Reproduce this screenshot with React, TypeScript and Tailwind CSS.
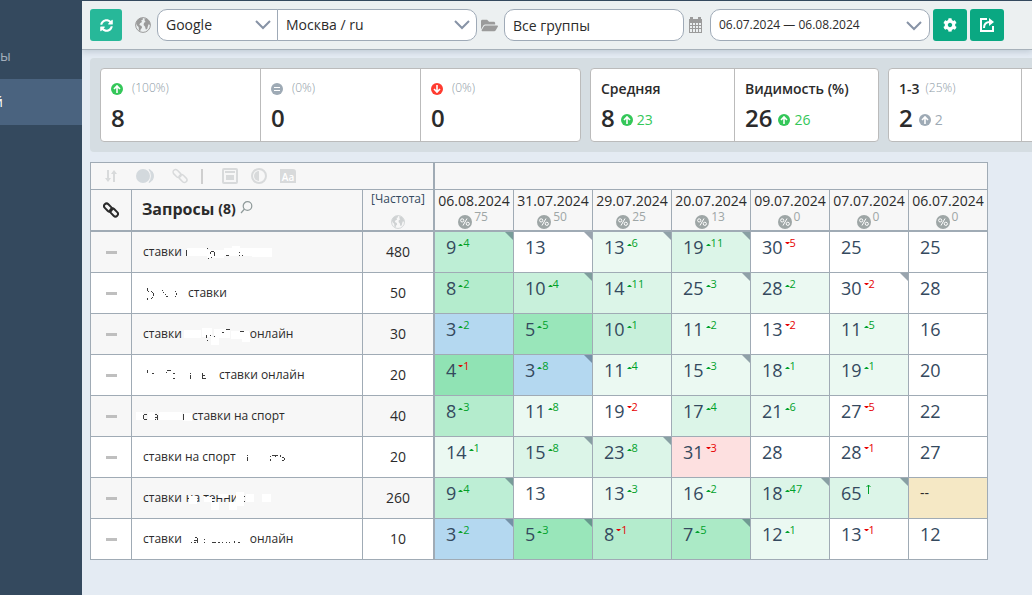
import { ReactNode } from "react";
import clsx from "clsx";
import { FaCog, FaFolderOpen, FaSyncAlt } from "react-icons/fa";

type Box = [number, number, number, number];

interface Smudge {
  width: number;
  patches?: Box[];
  marks?: Box[];
}

interface Position {
  value: string;
  tone?: keyof typeof tones;
  delta?: number;
  isNew?: boolean;
  flag?: boolean;
}

interface Query {
  parts: (string | Smudge)[];
  frequency: number;
  positions: Position[];
}

const tones = {
  white: "bg-white",
  faint: "bg-[#ebf9f2]",
  light: "bg-[#dcf5e8]",
  top10: "bg-[#c8f0db]",
  top9: "bg-[#bdeed5]",
  top8: "bg-[#b4eccd]",
  top7: "bg-[#abeac6]",
  top5: "bg-[#99e6ba]",
  top4: "bg-[#90e3b4]",
  top3: "bg-[#b4d8f0]",
  lost: "bg-[#fde0e0]",
  none: "bg-[#f5e8c5]",
};

const dates = [
  { date: "06.08.2024", percent: 75 },
  { date: "31.07.2024", percent: 50 },
  { date: "29.07.2024", percent: 25 },
  { date: "20.07.2024", percent: 13 },
  { date: "09.07.2024", percent: 0 },
  { date: "07.07.2024", percent: 0 },
  { date: "06.07.2024", percent: 0 },
];

const queries: Query[] = [
  {
    parts: [
      "ставки",
      {
        width: 90,
        patches: [[5, 16, 20, 8], [25, 18, 17, 8], [42, 16, 28, 8], [50, 14, 8, 3], [70, 16, 20, 9]],
        marks: [[4, 18, 1, 6], [25, 16, 1, 1], [26, 26, 1, 1], [29, 19, 3, 1], [28, 20, 1, 2], [32, 20, 1, 4], [29, 25, 1, 1], [44, 23, 3, 1], [57, 20, 1, 1], [57, 23, 1, 1], [60, 23, 1, 1]],
      },
    ],
    frequency: 480,
    positions: [
      { value: "9", delta: 4, tone: "top9", flag: true },
      { value: "13", flag: true },
      { value: "13", delta: 6, tone: "faint", flag: true },
      { value: "19", delta: 11, tone: "light", flag: true },
      { value: "30", delta: -5 },
      { value: "25" },
      { value: "25" },
    ],
  },
  {
    parts: [
      {
        width: 45,
        marks: [[4, 15, 1, 3], [5, 18, 1, 1], [4, 25, 1, 2], [8, 18, 1, 1], [9, 19, 1, 1], [10, 20, 1, 3], [9, 24, 1, 1], [8, 25, 1, 1], [19, 17, 1, 1], [20, 19, 1, 1], [22, 21, 1, 1], [23, 23, 2, 1], [32, 18, 1, 1], [33, 20, 1, 2], [32, 23, 1, 1]],
      },
      "ставки",
    ],
    frequency: 50,
    positions: [
      { value: "8", delta: 2, tone: "top8" },
      { value: "10", delta: 4, tone: "top10", flag: true },
      { value: "14", delta: 11, tone: "light" },
      { value: "25", delta: 3, tone: "faint", flag: true },
      { value: "28", delta: 2, tone: "faint" },
      { value: "30", delta: -2, flag: true },
      { value: "28" },
    ],
  },
  {
    parts: [
      "ставки",
      {
        width: 68,
        patches: [[2, 16, 17, 8], [20, 14, 10, 9], [29, 23, 8, 8], [32, 15, 16, 9], [49, 17, 18, 8], [60, 19, 8, 9]],
        marks: [[24, 21, 1, 3], [25, 26, 1, 1], [28, 21, 1, 1], [32, 22, 1, 1], [40, 18, 2, 1], [44, 15, 4, 1], [58, 17, 4, 1]],
      },
      "онлайн",
    ],
    frequency: 30,
    positions: [
      { value: "3", delta: 2, tone: "top3" },
      { value: "5", delta: 5, tone: "top5" },
      { value: "10", delta: 1, tone: "top10" },
      { value: "11", delta: 2, tone: "faint" },
      { value: "13", delta: -2 },
      { value: "11", delta: 5, tone: "faint" },
      { value: "16" },
    ],
  },
  {
    parts: [
      {
        width: 76,
        marks: [[4, 15, 1, 3], [9, 18, 2, 1], [24, 15, 4, 1], [23, 17, 1, 1], [30, 18, 2, 1], [30, 23, 2, 1], [47, 18, 1, 1], [47, 20, 1, 4], [59, 18, 1, 6], [60, 20, 2, 1], [60, 23, 3, 1]],
      },
      "ставки онлайн",
    ],
    frequency: 20,
    positions: [
      { value: "4", delta: -1, tone: "top4" },
      { value: "3", delta: 8, tone: "top3", flag: true },
      { value: "11", delta: 4, tone: "faint" },
      { value: "15", delta: 3, tone: "faint", flag: true },
      { value: "18", delta: 1, tone: "faint" },
      { value: "19", delta: 1, tone: "faint" },
      { value: "20" },
    ],
  },
  {
    parts: [
      {
        width: 49,
        patches: [[-7, 16, 7, 8], [5, 16, 7, 8], [16, 16, 23, 8], [41, 17, 8, 8]],
        marks: [[1, 18, 3, 1], [0, 19, 1, 4], [1, 23, 3, 1], [12, 18, 2, 1], [14, 19, 1, 5], [12, 21, 2, 1], [12, 23, 1, 1], [40, 18, 1, 6]],
      },
      "ставки на спорт",
    ],
    frequency: 40,
    positions: [
      { value: "8", delta: 3, tone: "top8" },
      { value: "11", delta: 8, tone: "faint" },
      { value: "19", delta: -2 },
      { value: "17", delta: 4, tone: "light" },
      { value: "21", delta: 6, tone: "faint" },
      { value: "27", delta: -5 },
      { value: "22" },
    ],
  },
  {
    parts: [
      "ставки на спорт",
      {
        width: 50,
        marks: [[11, 18, 1, 1], [11, 20, 1, 4], [34, 19, 1, 1], [34, 22, 1, 2], [36, 18, 6, 1], [39, 19, 1, 1], [44, 18, 1, 2], [46, 20, 2, 1], [48, 21, 1, 2], [46, 23, 2, 1]],
      },
    ],
    frequency: 20,
    positions: [
      { value: "14", delta: 1, tone: "faint" },
      { value: "15", delta: 8, tone: "light", flag: true },
      { value: "23", delta: 8, tone: "light", flag: true },
      { value: "31", delta: -3, tone: "lost" },
      { value: "28" },
      { value: "28", delta: -1 },
      { value: "27" },
    ],
  },
  {
    parts: [
      "ставки",
      {
        width: 4,
        patches: [[7, 18, 8, 8], [22, 19, 8, 5], [29, 24, 8, 8], [37, 16, 9, 4], [47, 24, 8, 8], [54, 14, 8, 14], [64, 16, 8, 8], [80, 16, 9, 8]],
        marks: [[62, 18, 1, 1], [62, 23, 1, 1]],
      },
      "на тенни",
    ],
    frequency: 260,
    positions: [
      { value: "9", delta: 4, tone: "top9", flag: true },
      { value: "13" },
      { value: "13", delta: 3, tone: "faint" },
      { value: "16", delta: 2, tone: "faint" },
      { value: "18", delta: 47, tone: "light", flag: true },
      { value: "65", isNew: true, tone: "light", flag: true },
      { value: "--", tone: "none" },
    ],
  },
  {
    parts: [
      "ставки",
      {
        width: 68,
        marks: [[9, 23, 1, 1], [13, 18, 2, 1], [15, 19, 1, 5], [12, 21, 3, 1], [12, 23, 2, 1], [22, 20, 1, 1], [22, 23, 1, 1], [30, 23, 4, 1], [36, 23, 2, 1], [40, 23, 1, 1], [44, 23, 1, 1], [47, 23, 1, 1], [52, 22, 1, 2], [56, 23, 2, 1]],
      },
      "онлайн",
    ],
    frequency: 10,
    positions: [
      { value: "3", delta: 2, tone: "top3", flag: true },
      { value: "5", delta: 3, tone: "top5", flag: true },
      { value: "8", delta: -1, tone: "top8" },
      { value: "7", delta: 5, tone: "top7", flag: true },
      { value: "12", delta: 1, tone: "faint" },
      { value: "13", delta: -1 },
      { value: "12" },
    ],
  },
];

function GlobeIcon({ className }: { className?: string }) {
  return (
    <svg viewBox="0 0 16 16" className={className} fill="currentColor" aria-hidden="true">
      <circle cx="8" cy="8" r="7.4" fill="none" stroke="currentColor" strokeWidth="1" />
      <path d="M1 6 L2.5 2.8 L5.5 1 L8 1.2 L7.6 3 L6.2 3.2 L7 5 L5 6.2 L4.4 8 L6.6 9 L7 10.8 L5.6 12.4 L5.2 14.8 L3.9 13 L3.6 10 L1.8 8.2 Z" />
      <path d="M9.6 1.2 L12.6 2.2 L15 5.6 L15.2 8 L13.6 7.2 L12.8 9.4 L12.2 12 L10.8 12.6 L10 9.4 L8.6 8 L9 5.8 L10.6 5 L9.6 3.6 Z" />
    </svg>
  );
}

function CalendarIcon() {
  return (
    <svg viewBox="0 0 13 16" className="h-4 w-[13px] text-[#9b9b9b]" fill="currentColor" aria-hidden="true">
      <path
        fillRule="evenodd"
        d="M0 2h1V0h3v2h5V0h3v2h1v14H0zM1 6v2h2V6zM4 6v2h2V6zM7 6v2h2V6zM10 6v2h2V6zM1 9v2h2V9zM4 9v2h2V9zM7 9v2h2V9zM10 9v2h2V9zM1 12v3h2v-3zM4 12v3h2v-3zM7 12v3h2v-3zM10 12v3h2v-3z"
      />
    </svg>
  );
}

function ExportIcon() {
  return (
    <svg viewBox="0 0 16 16" className="size-4" fill="none" stroke="currentColor" strokeWidth="2" aria-hidden="true">
      <path d="M8 2H2v12h12V9" />
      <path d="M5 11c0-4 2-6 6-6" />
      <path d="M10 1l5 4-5 4z" fill="currentColor" stroke="none" />
    </svg>
  );
}

function ChainIcon({ className, strokeWidth }: { className: string; strokeWidth: number }) {
  return (
    <svg viewBox="0 0 16 16" className={className} fill="none" stroke="currentColor" strokeWidth={strokeWidth} aria-hidden="true">
      <rect x="0.500" y="3" width="9" height="5" rx="2.500" transform="rotate(45 5 5.500)" />
      <rect x="6.500" y="8" width="9" height="5" rx="2.500" transform="rotate(45 11 10.500)" />
    </svg>
  );
}

function Chevron() {
  return (
    <svg
      viewBox="0 0 16 10"
      className="pointer-events-none absolute right-[7px] top-[11px] h-[10px] w-4"
      fill="none"
      stroke="#8793a6"
      strokeWidth="2"
      aria-hidden="true"
    >
      <path d="M1 1l7 7 7-7" />
    </svg>
  );
}

function StatusIcon({ kind, className }: { kind: "up" | "down" | "same"; className: string }) {
  return (
    <svg viewBox="0 0 12 12" className={clsx("size-3 shrink-0", className)} aria-hidden="true">
      <circle cx="6" cy="6" r="6" fill="currentColor" />
      {kind === "same" ? (
        <path d="M3 4.5h6M3 7.5h6" stroke="#fff" strokeWidth="1.2" />
      ) : (
        <path
          d={kind === "up" ? "M6 10V3M3 6l3-3 3 3" : "M6 2v7M3 6l3 3 3-3"}
          stroke="#fff"
          strokeWidth="1.6"
          fill="none"
        />
      )}
    </svg>
  );
}

function PercentIcon() {
  return (
    <svg viewBox="0 0 14 14" className="size-[14px]" aria-hidden="true">
      <circle cx="7" cy="7" r="7" fill="#9ea6a6" />
      <g fill="none" stroke="#fff">
        <circle cx="4.2" cy="5.4" r="1.6" />
        <circle cx="9.8" cy="8.8" r="1.6" />
        <path d="M9 3.5L5 10.5" />
      </g>
    </svg>
  );
}

function SmudgeMark({ smudge }: { smudge: Smudge }) {
  return (
    <svg
      width={smudge.width}
      height="40"
      className="relative shrink-0 overflow-visible"
      shapeRendering="crispEdges"
      aria-hidden="true"
    >
      {smudge.patches?.map(([x, y, w, h], i) => (
        <rect key={i} x={x} y={y} width={w} height={h} fill="#fff" />
      ))}
      {smudge.marks?.map(([x, y, w, h], i) => (
        <rect key={i} x={x} y={y} width={w} height={h} fill="#3c3c3c" />
      ))}
    </svg>
  );
}

function Select({ label, value, className }: { label: string; value: string; className: string }) {
  return (
    <div className="relative">
      <select
        aria-label={label}
        defaultValue={value}
        className={clsx("h-8 appearance-none border border-[#9faab7] bg-white pl-2 pr-7 text-sm text-[#2b2b2b]", className)}
      >
        <option>{value}</option>
      </select>
      <Chevron />
    </div>
  );
}

function Toolbar() {
  return (
    <header className="relative flex h-[49px] items-center border-b border-[#a7b1ba] bg-[#ecf0f1] pl-2 shadow-[0_2px_6px_rgba(52,73,94,0.2)]">
      <button type="button" aria-label="Обновить" className="flex size-8 items-center justify-center rounded-[3px] bg-[#27b899] text-white">
        <FaSyncAlt className="size-[13px]" />
      </button>
      <GlobeIcon className="mr-1.5 ml-[13px] size-4 text-[#9b9b9b]" />
      <Select label="Поисковая система" value="Google" className="w-[121px] rounded-l-[10px]" />
      <div className="-ml-px">
        <Select label="Регион" value="Москва / ru" className="w-[200px] rounded-r-[10px]" />
      </div>
      <FaFolderOpen className="mr-1.5 ml-1 size-[17px] text-[#9b9b9b]" />
      <input
        aria-label="Группы"
        defaultValue="Все группы"
        className="h-8 w-[180px] rounded-[10px] border border-[#9faab7] bg-white px-2 text-sm text-[#2b2b2b]"
      />
      <div className="mr-2 ml-[5px]">
        <CalendarIcon />
      </div>
      <button
        type="button"
        className="relative h-8 w-[220px] rounded-[10px] border border-[#9faab7] bg-white px-2 pb-px text-left text-xs text-[#2b2b2b]"
      >
        06.07.2024 — 06.08.2024
        <Chevron />
      </button>
      <div className="ml-[3px] flex gap-[3px]">
        <button type="button" aria-label="Настройки" className="flex h-8 w-[34px] items-center justify-center rounded-[3px] bg-[#0aa882] text-white">
          <FaCog className="size-[14px]" />
        </button>
        <button type="button" aria-label="Экспорт" className="flex h-8 w-[34px] items-center justify-center rounded-[3px] bg-[#0aa882] text-white">
          <ExportIcon />
        </button>
      </div>
    </header>
  );
}

function StatCard({ title, value, className }: { title: ReactNode; value: ReactNode; className: string }) {
  return (
    <div className={clsx("h-[72px] shrink-0 pt-2.5 pl-2.5", className)}>
      <div className="flex h-5 items-center whitespace-nowrap text-sm font-semibold">{title}</div>
      <div className="mt-[3px] flex h-8 items-center gap-1.5 text-2xl font-semibold">{value}</div>
    </div>
  );
}

function Percent({ children }: { children: string }) {
  return <span className="pb-0.5 text-xs font-light text-[#8d9aa5]">{children}</span>;
}

function Trend({ value, className }: { value: number; className: string }) {
  return (
    <span className={clsx("flex items-center gap-1 pt-1 text-sm font-normal", className)}>
      <StatusIcon kind="up" className={className} />
      {value}
    </span>
  );
}

function Summary() {
  const group = "flex shrink-0 divide-x divide-[#bbbbbb] rounded-[4px] border border-[#bbbbbb] bg-white";

  return (
    <section className="ml-2 flex gap-[9px] overflow-hidden rounded-l-[4px] bg-[#d5dde2] p-2.5">
      <div className={group}>
        <StatCard
          className="w-[160px]"
          title={<><StatusIcon kind="up" className="mr-[9px] text-[#34c759]" /><Percent>(100%)</Percent></>}
          value="8"
        />
        <StatCard
          className="w-[160px]"
          title={<><StatusIcon kind="same" className="mr-[9px] text-[#9eaab5]" /><Percent>(0%)</Percent></>}
          value="0"
        />
        <StatCard
          className="w-[159px]"
          title={<><StatusIcon kind="down" className="mr-[9px] text-[#ff3b30]" /><Percent>(0%)</Percent></>}
          value="0"
        />
      </div>
      <div className={group}>
        <StatCard className="w-[144px]" title="Средняя" value={<>8<Trend value={23} className="text-[#34c759]" /></>} />
        <StatCard className="w-[143px]" title="Видимость (%)" value={<>26<Trend value={26} className="text-[#34c759]" /></>} />
      </div>
      <div className={group}>
        <StatCard
          className="w-[133px]"
          title={<><span className="mr-1.5">1-3</span><Percent>(25%)</Percent></>}
          value={<>2<Trend value={2} className="text-[#9eaab5]" /></>}
        />
        <StatCard className="w-[133px]" title="" value="" />
      </div>
    </section>
  );
}

function TableTools() {
  const button = "flex h-5 items-center justify-center";

  return (
    <div className="flex h-[26px] items-center pl-3 text-[#d8dadb]">
      <button type="button" aria-label="Сортировка" className={clsx(button, "w-4")}>
        <svg viewBox="0 0 14 14" className="size-[14px]" fill="none" stroke="currentColor" strokeWidth="2">
          <path d="M4 1v10M10 13V3" />
          <path d="M1 9l3 4 3-4zM7 5l3-4 3 4z" fill="currentColor" stroke="none" />
        </svg>
      </button>
      <button type="button" aria-label="Сравнение" className={clsx(button, "ml-[17px] w-5")}>
        <svg viewBox="0 0 20 14" className="h-[14px] w-5">
          <circle cx="7" cy="7" r="7" fill="#d3d9dd" />
          <path d="M13 0.500a7 7 0 0 1 0 13a10 10 0 0 0 0-13z" fill="#d3d9dd" stroke="#d3d9dd" />
        </svg>
      </button>
      <button type="button" aria-label="Ссылки" className={clsx(button, "ml-4 w-4")}>
        <ChainIcon className="size-4" strokeWidth={1.5} />
      </button>
      <span className="ml-[13px] h-[15px] w-0.5 bg-[#cfcfcf]" />
      <button type="button" aria-label="Вид" className={clsx(button, "ml-[19px] w-4")}>
        <svg viewBox="0 0 16 16" className="size-4" fill="none" stroke="currentColor" strokeWidth="2">
          <rect x="1" y="1" width="14" height="14" rx="1" />
          <path d="M3 4h10" />
          <path d="M4 7h8v5H4z" fill="currentColor" stroke="none" />
        </svg>
      </button>
      <button type="button" aria-label="Контраст" className={clsx(button, "ml-[13px] w-4")}>
        <svg viewBox="0 0 16 16" className="size-4" fill="none" stroke="currentColor" strokeWidth="2">
          <circle cx="8" cy="8" r="7" />
          <path d="M8 3a5 5 0 0 0 0 10z" fill="currentColor" stroke="none" />
        </svg>
      </button>
      <button type="button" className={clsx(button, "ml-[13px] w-4")}>
        <span className="h-[14px] w-4 rounded-tr-[3px] bg-[#d8dadb] text-[10px] leading-4 font-semibold text-white">Aa</span>
      </button>
    </div>
  );
}

function PositionCell({ position }: { position: Position }) {
  const { value, tone = "white", delta, isNew, flag } = position;
  const isUp = isNew || (delta ?? 0) > 0;

  return (
    <td className={clsx("relative h-[41px] border-r border-b border-[#a0abb5] p-0 align-top", tones[tone])}>
      <div className="flex h-[30px] items-center pl-[11px] text-lg text-[#34495e]">
        {value === "--" ? <span className="text-sm text-[#2b2b2b]">--</span> : value}
        {(delta || isNew) && (
          <span className={clsx("ml-0.5 flex h-[22px] items-center self-start text-[11px]", isUp ? "text-[#00a12b]" : "text-[#e60000]")}>
            {isNew ? (
              <svg viewBox="0 0 5 10" className="ml-0.5 h-[10px] w-[5px]" fill="none" stroke="currentColor" aria-label="новый">
                <path d="M2.500 10V1M0.500 3l2-2 2 2" />
              </svg>
            ) : (
              <>
                <svg viewBox="0 0 5 2" className={clsx("h-0.5 w-[5px]", isUp && "mt-1")} fill="currentColor" aria-hidden="true">
                  <path d={isUp ? "M0 2l2-2h1l2 2z" : "M0 0h5L3 2H2z"} />
                </svg>
                {Math.abs(delta ?? 0)}
              </>
            )}
          </span>
        )}
      </div>
      {flag && (
        <span className="absolute top-0 right-0 size-0 border-t-8 border-l-8 border-t-[#34495e]/50 border-l-transparent" />
      )}
    </td>
  );
}

function PositionsTable() {
  return (
    <table className="mt-2.5 ml-2 w-[898px] table-fixed border-separate border-spacing-0 border-t border-l border-[#a0abb5] text-[#2b2b2b]">
      <colgroup>
        <col className="w-[41px]" />
        <col className="w-[231px]" />
        <col className="w-[72px]" />
        {dates.map(({ date }) => (
          <col key={date} className="w-[79px]" />
        ))}
      </colgroup>
      <thead className="bg-[#f7f7f7]">
        <tr>
          <td colSpan={3} className="h-[27px] border-r-2 border-b border-[#a0abb5] p-0">
            <TableTools />
          </td>
          <td colSpan={7} className="border-r border-b border-[#a0abb5] p-0" />
        </tr>
        <tr>
          <th className="h-[42px] border-r border-b-2 border-[#a0abb5] p-0">
            <ChainIcon className="mx-auto size-4" strokeWidth={2} />
          </th>
          <th className="border-r border-b-2 border-[#a0abb5] p-0">
            <div className="flex items-center pb-0.5 pl-2.5 text-base font-bold">
              Запросы
              <span className="ml-1 text-sm">(8)</span>
              <button type="button" aria-label="Поиск" className="mb-1 ml-1">
                <svg viewBox="0 0 13 13" className="size-[13px]" fill="none" stroke="#8f9a9a" strokeWidth="1.2">
                  <circle cx="7.500" cy="5" r="4.300" />
                  <path d="M4.500 8L1 12" />
                </svg>
              </button>
            </div>
          </th>
          <th className="border-r-2 border-b-2 border-[#a0abb5] p-0 font-normal">
            <div className="flex h-10 flex-col items-center justify-between pb-px">
              <a href="#frequency" className="text-xs leading-[18px] text-[#34495e]">[Частота]</a>
              <GlobeIcon className="size-[14px] text-[#cfd2d3]" />
            </div>
          </th>
          {dates.map(({ date, percent }) => (
            <th key={date} className="border-r border-b-2 border-[#a0abb5] p-0 text-sm font-normal">
              <div className="flex h-10 flex-col items-center pt-px">
                <span className="leading-5">{date}</span>
                <span className="flex h-[18px] items-end gap-0.5 pr-0.5">
                  <PercentIcon />
                  <span className="self-start text-xs leading-3 text-[#9ea6a6]">{percent}</span>
                </span>
              </div>
            </th>
          ))}
        </tr>
      </thead>
      <tbody>
        {queries.map((query, i) => (
          <tr key={i} className="bg-white odd:bg-[#f7f7f7]">
            <td className="h-[41px] border-r border-b border-[#a0abb5] p-0">
              <button type="button" aria-label="Свернуть" className="mx-auto block h-[3px] w-[11px] bg-[#bfbfbf]" />
            </td>
            <td className="border-r border-b border-[#a0abb5] p-0">
              <div className="flex h-10 items-center pl-[11px] text-xs whitespace-pre">
                {query.parts.map((part, j) =>
                  typeof part === "string" ? <span key={j}>{part}</span> : <SmudgeMark key={j} smudge={part} />
                )}
              </div>
            </td>
            <td className="border-r-2 border-b border-[#a0abb5] p-0 text-center text-sm">{query.frequency}</td>
            {query.positions.map((position, j) => (
              <PositionCell key={j} position={position} />
            ))}
          </tr>
        ))}
      </tbody>
    </table>
  );
}

export default function App() {
  return (
    <div className="flex min-h-screen border-t border-[#34495e] bg-[#e4ebf3] font-['Open_Sans','Noto_Sans',sans-serif] text-[#2b2b2b]">
      <nav className="w-[82px] shrink-0 overflow-hidden bg-[#34495e] pt-8 text-sm">
        <a href="#projects" className="flex h-[46px] items-center text-[#a3aebb]">ы</a>
        <a href="#positions" className="flex h-[46px] items-center bg-[#4a637f] text-white">
          <span className="-ml-1.5">й</span>
        </a>
      </nav>
      <main className="min-w-0 flex-1 overflow-hidden">
        <Toolbar />
        <div className="pt-2">
          <Summary />
          <PositionsTable />
        </div>
      </main>
    </div>
  );
}
